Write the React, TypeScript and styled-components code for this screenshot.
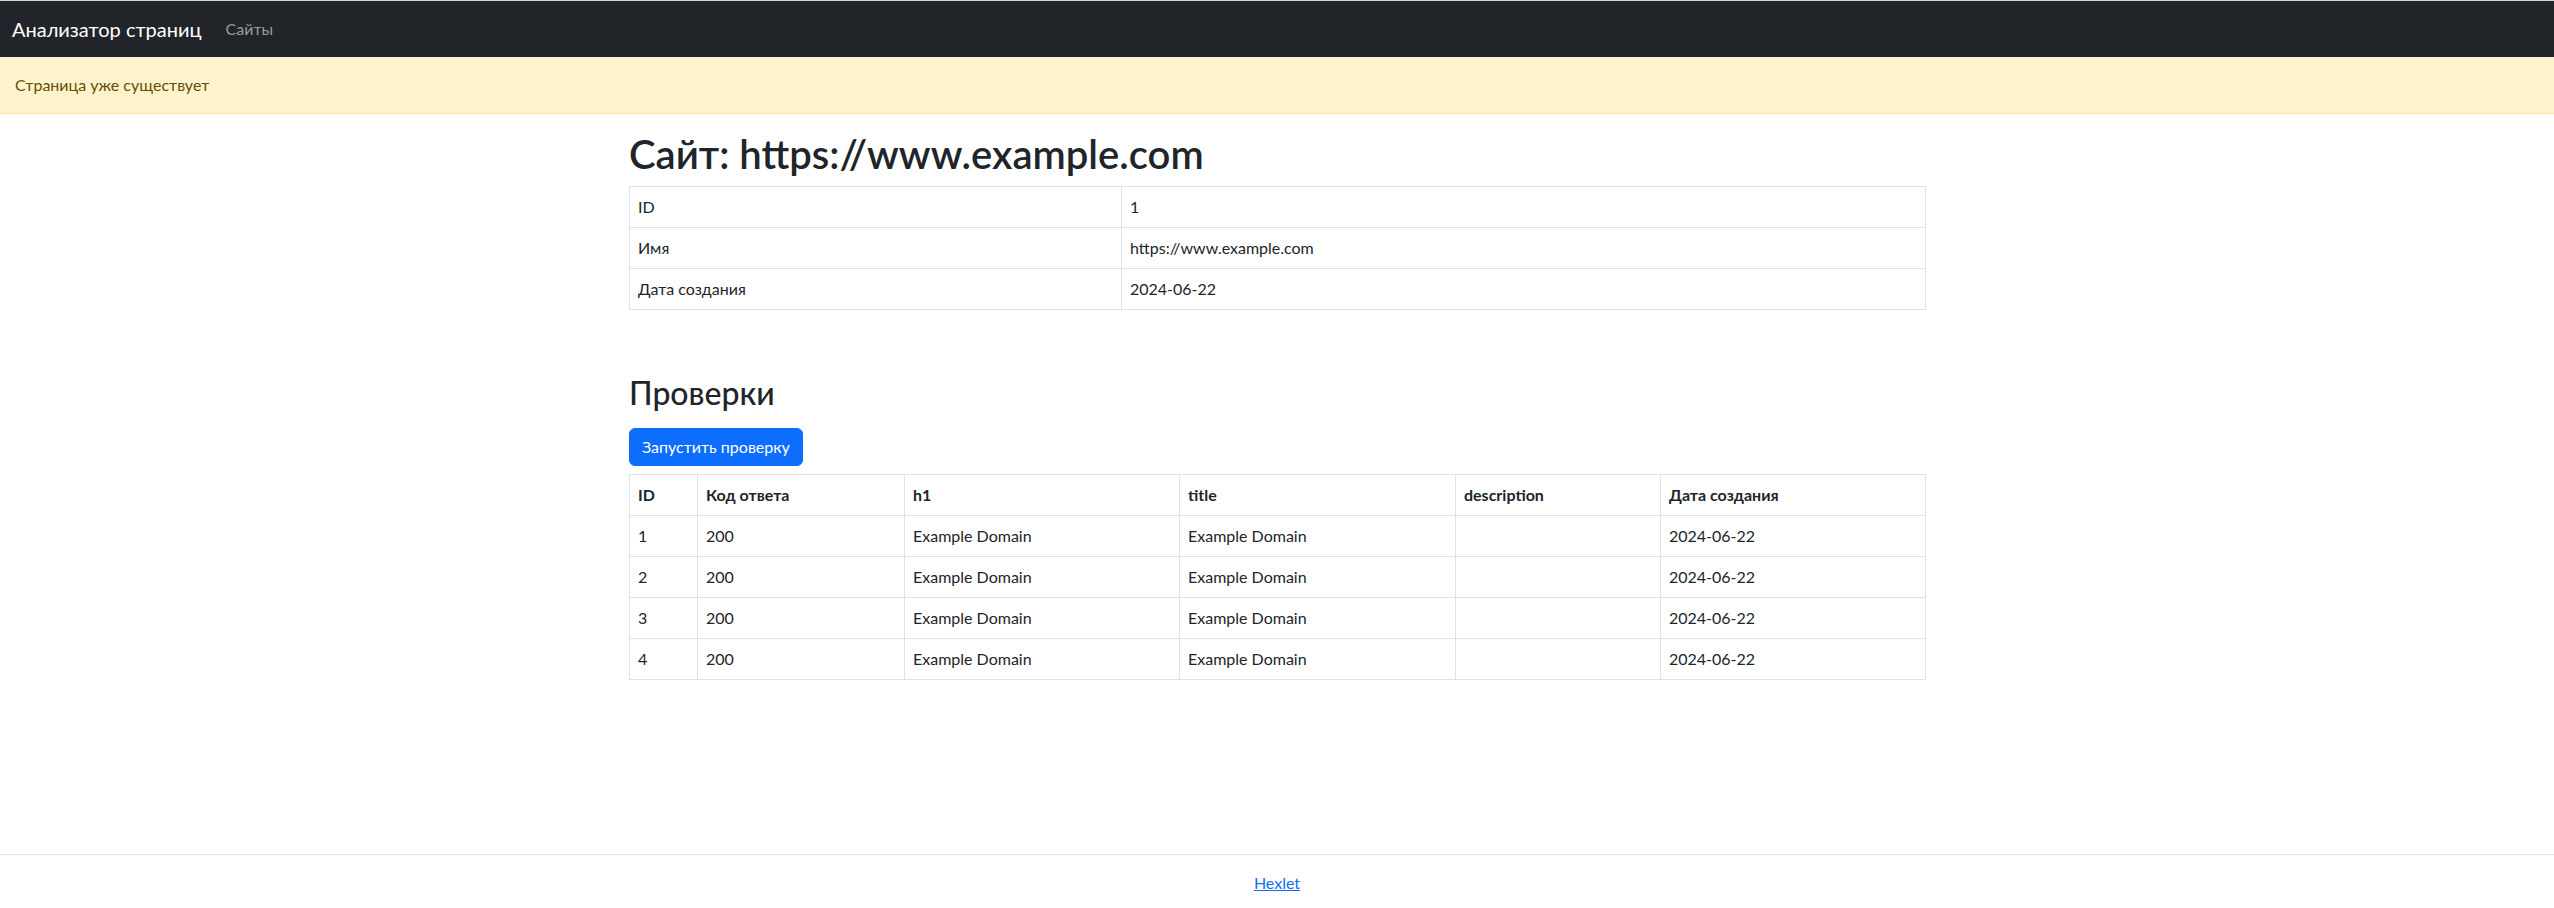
import React from "react";
import styled, { createGlobalStyle } from "styled-components";

const GlobalStyle = createGlobalStyle`
  *, *::before, *::after { box-sizing: border-box; }
  html, body { margin: 0; padding: 0; }
  body {
    font-family: "Lato", "Noto Sans", sans-serif;
    font-size: 16px;
    line-height: 1.5;
    color: #212529;
    background: #fff;
  }
`;

const Page = styled.div`
  min-height: 100vh;
  display: flex;
  flex-direction: column;
  border-top: 1px solid #cfd1d3;
`;

const Navbar = styled.nav`
  background: #212529;
  height: 56px;
  padding: 8px 12px;
  display: flex;
  align-items: center;
`;

const Brand = styled.a`
  font-size: 20px;
  line-height: 30px;
  padding: 5px 0;
  margin-right: 16px;
  color: #fff;
  text-decoration: none;
  white-space: nowrap;
`;

const NavLink = styled.a`
  padding: 8px;
  color: rgba(255, 255, 255, 0.55);
  text-decoration: none;
  line-height: 24px;
`;

const Alert = styled.div`
  background: #fff3cd;
  color: #664d03;
  border-bottom: 1px solid #ffe69c;
  padding: 16px 15px 16px;
  line-height: 24px;
  margin-bottom: 16px;
`;

const Main = styled.main`
  flex: 1;
  width: 100%;
  max-width: 1320px;
  margin: 0 auto;
  padding: 0 12px;
`;

const Title = styled.h1`
  font-size: 40px;
  font-weight: 600;
  line-height: 48px;
  margin: 0 0 8px;
`;

const SectionTitle = styled.h2`
  font-size: 32px;
  font-weight: 500;
  line-height: 38.4px;
  margin: 48px 0 16px;
`;

const Button = styled.button`
  display: inline-block;
  font-family: inherit;
  font-size: 16px;
  line-height: 24px;
  padding: 6px 12px;
  border: 1px solid #0d6efd;
  border-radius: 6px;
  background: #0d6efd;
  color: #fff;
  cursor: pointer;
  margin-bottom: 8px;
`;

const TableWrap = styled.div`
  display: flow-root;
`;

const Table = styled.table`
  width: 100%;
  border-collapse: collapse;
  table-layout: fixed;
  margin-bottom: 16px;
  border: 1px solid #dee2e6;
`;

const Col = styled.col<{ $w: number }>`
  width: ${(p) => p.$w}px;
`;

const Th = styled.th`
  text-align: left;
  font-weight: 700;
  padding: 8px;
  line-height: 24px;
  border: 1px solid #dee2e6;
  white-space: nowrap;
`;

const Td = styled.td`
  padding: 8px;
  line-height: 24px;
  border: 1px solid #dee2e6;
  white-space: nowrap;
`;

const Footer = styled.footer`
  border-top: 1px solid #dee2e6;
  padding: 16px 0 13px;
  text-align: center;
`;

const FooterLink = styled.a`
  color: #0d6efd;
  text-decoration: underline;
`;

const checks = [1, 2, 3, 4].map((id) => ({
  id,
  code: 200,
  h1: "Example Domain",
  title: "Example Domain",
  description: "",
  date: "2024-06-22",
}));

export default function App() {
  return (
    <>
      <GlobalStyle />
      <Page>
        <Navbar>
          <Brand href="#">Анализатор страниц</Brand>
          <NavLink href="#">Сайты</NavLink>
        </Navbar>
        <Alert>Страница уже существует</Alert>
        <Main>
          <Title>Сайт: https://www.example.com</Title>
          <TableWrap>
            <Table>
              <colgroup>
                <Col $w={492} />
                <Col $w={804} />
              </colgroup>
              <tbody>
                <tr>
                  <Td>ID</Td>
                  <Td>1</Td>
                </tr>
                <tr>
                  <Td>Имя</Td>
                  <Td>https://www.example.com</Td>
                </tr>
                <tr>
                  <Td>Дата создания</Td>
                  <Td>2024-06-22</Td>
                </tr>
              </tbody>
            </Table>
          </TableWrap>

          <SectionTitle>Проверки</SectionTitle>
          <Button type="button">Запустить проверку</Button>
          <TableWrap>
            <Table>
              <colgroup>
                <Col $w={68} />
                <Col $w={207} />
                <Col $w={275} />
                <Col $w={276} />
                <Col $w={205} />
                <Col $w={265} />
              </colgroup>
              <thead>
                <tr>
                  <Th>ID</Th>
                  <Th>Код ответа</Th>
                  <Th>h1</Th>
                  <Th>title</Th>
                  <Th>description</Th>
                  <Th>Дата создания</Th>
                </tr>
              </thead>
              <tbody>
                {checks.map((c) => (
                  <tr key={c.id}>
                    <Td>{c.id}</Td>
                    <Td>{c.code}</Td>
                    <Td>{c.h1}</Td>
                    <Td>{c.title}</Td>
                    <Td>{c.description}</Td>
                    <Td>{c.date}</Td>
                  </tr>
                ))}
              </tbody>
            </Table>
          </TableWrap>
        </Main>
        <Footer>
          <FooterLink href="#">Hexlet</FooterLink>
        </Footer>
      </Page>
    </>
  );
}
